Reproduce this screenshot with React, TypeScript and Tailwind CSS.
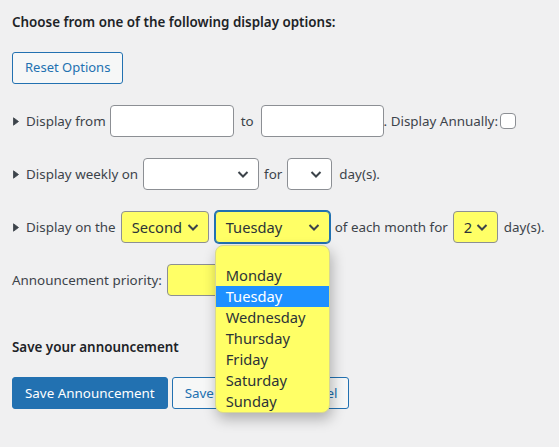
import React from 'react';

const days = ['', 'Monday', 'Tuesday', 'Wednesday', 'Thursday', 'Friday', 'Saturday', 'Sunday'];

function Bullet() {
  return (
    <svg width="6" height="9" viewBox="0 0 6 9" className="ml-[1px] mr-[7px] shrink-0">
      <path d="M0.5 0.8 L5.5 4.5 L0.5 8.2 Z" fill="#3c434a" strokeLinejoin="round" stroke="#3c434a" strokeWidth="0.8" />
    </svg>
  );
}

function Chevron() {
  return (
    <svg width="14" height="14" viewBox="0 0 14 14" className="shrink-0">
      <path d="M2.5 5 L7 9.5 L11.5 5" fill="none" stroke="#3c434a" strokeWidth="2" />
    </svg>
  );
}

function Select({
  value,
  width,
  yellow,
  focused,
  children,
}: {
  value?: string;
  width: string;
  yellow?: boolean;
  focused?: boolean;
  children?: React.ReactNode;
}) {
  return (
    <div
      className={`relative flex h-8 shrink-0 items-center justify-between rounded-[4px] border pl-[10px] pr-[8px] text-[14.7px] ${width} ${
        yellow ? 'bg-[#ffff66]' : 'bg-white'
      } ${focused ? 'border-[#2271b1] shadow-[0_0_0_1px_#2271b1]' : 'border-[#8c8f94]'}`}
    >
      <span className="text-[#2c3338]">{value}</span>
      <Chevron />
      {children}
    </div>
  );
}

export default function App() {
  return (
    <div
      className="min-h-screen whitespace-nowrap bg-[#f0f0f1] px-3 pt-3 text-[13.4px] text-[#3c434a]"
      style={{ fontFamily: '"Noto Sans", "Open Sans", sans-serif' }}
    >
      <h2 className="text-[13.4px] font-semibold leading-5 text-[#1d2327]">
        Choose from one of the following display options:
      </h2>

      <button className="mt-5 flex h-8 items-center rounded-[3px] border border-[#2271b1] bg-[#f6f7f7] px-3 text-[13px] text-[#2271b1]">
        Reset Options
      </button>

      {/* Display from */}
      <div className="mt-[21px] flex h-8 items-center">
        <Bullet />
        <span>Display from</span>
        <div className="ml-[4px] h-8 w-[124px] shrink-0 rounded-[4px] border border-[#8c8f94] bg-white" />
        <span className="mx-[7px]">to</span>
        <div className="h-8 w-[123px] shrink-0 rounded-[4px] border border-[#8c8f94] bg-white" />
        <span>. Display Annually:</span>
        <div className="ml-[2px] h-4 w-4 shrink-0 rounded-[4px] border border-[#8c8f94] bg-white" />
      </div>

      {/* Weekly */}
      <div className="mt-[21px] flex h-8 items-center">
        <Bullet />
        <span>Display weekly on</span>
        <div className="ml-[5px]">
          <Select width="w-[116px]" />
        </div>
        <span className="mx-[5px]">for</span>
        <Select width="w-[45px]" />
        <span className="ml-[7px]">day(s).</span>
      </div>

      {/* Monthly */}
      <div className="relative z-10 mt-[21px] flex h-8 items-center">
        <Bullet />
        <span>Display on the</span>
        <div className="ml-[5px]">
          <Select value="Second" width="w-[88px]" yellow />
        </div>
        <div className="ml-[6px]">
          <Select value="Tuesday" width="w-[115px]" yellow focused>
            <ul className="absolute left-[-1px] top-[33px] w-[115px] overflow-hidden rounded-[8px] border border-[#d8d890] bg-[#ffff66] text-[14.7px] text-[#2c3338] shadow-[2px_6px_14px_rgba(0,0,0,0.28)]">
              {days.map((d, i) => (
                <li
                  key={i}
                  className={`pl-[10px] leading-[21px] ${i === 0 ? 'h-[19px]' : 'h-[21px]'} ${
                    d === 'Tuesday' ? 'bg-[#1e90ff] text-white' : ''
                  }`}
                >
                  {d}
                </li>
              ))}
            </ul>
          </Select>
        </div>
        <span className="mx-[5px]">of each month for</span>
        <Select value="2" width="w-[45px]" yellow />
        <span className="ml-[6px]">day(s).</span>
      </div>

      {/* Priority */}
      <div className="mt-[21px] flex h-8 items-center">
        <span>Announcement priority:</span>
        <div className="ml-[5px] h-8 w-[80px] shrink-0 rounded-[4px] border border-[#8c8f94] bg-[#ffff66]" />
      </div>

      <h3 className="mt-[41px] text-[13.4px] font-semibold leading-5 text-[#1d2327]">Save your announcement</h3>

      <div className="mt-5 flex items-center gap-1">
        <button className="flex h-8 items-center rounded-[3px] border border-[#2271b1] bg-[#2271b1] px-3 text-[13.4px] text-white">
          Save Announcement
        </button>
        <button className="flex h-8 items-center rounded-[3px] border border-[#2271b1] bg-[#f6f7f7] px-3 text-[13.4px] text-[#2271b1]">
          Save as Draft
        </button>
        <button className="flex h-8 items-center rounded-[3px] border border-[#2271b1] bg-[#f6f7f7] px-[11px] text-[13.4px] text-[#2271b1]">
          Cancel
        </button>
      </div>
    </div>
  );
}
